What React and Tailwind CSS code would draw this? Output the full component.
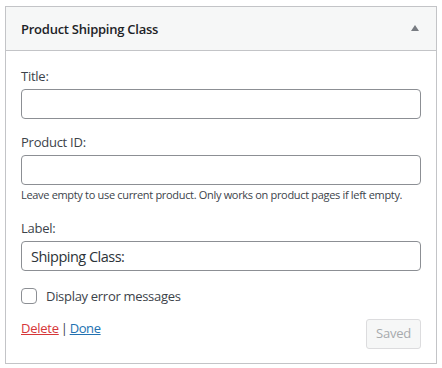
const Field = ({ label, value = "", className = "" }) => (
  <div className={className}>
    <label className="block h-5 leading-5 mb-[3px]">{label}</label>
    <input
      type="text"
      defaultValue={value}
      className="block w-[400px] h-[30px] px-[9px] border border-[#8c8f94] rounded-[4px] bg-white text-[#2c3338] text-[14.5px] tracking-[-0.5px] outline-none"
    />
  </div>
);

const App = () => {
  return (
    <div className="pt-[6px] pl-[5px] bg-white font-['Open_Sans',sans-serif] text-[13px] tracking-[-0.25px] text-[#3c434a]">
      <div className="w-[432px] h-[358px] border border-[#c3c4c7] bg-white flex flex-col">
        <div className="h-[44px] shrink-0 flex items-center justify-between pl-[15px] pr-[17px] bg-[#f6f7f7] border-b border-[#c3c4c7]">
          <h3 className="font-semibold text-[#1d2327] leading-5">Product Shipping Class</h3>
          <svg width="8" height="6" viewBox="0 0 8 6" className="mb-[1px]">
            <path d="M4 0 L8 6 L0 6 Z" fill="#787c82" />
          </svg>
        </div>

        <div className="pt-[15px] px-[15px] flex flex-col">
          <Field label="Title:" />
          <Field label="Product ID:" className="mt-[13px]" />
          <p className="mt-[2px] text-[11px] tracking-[-0.32px] leading-4 whitespace-nowrap">
            Leave empty to use current product. Only works on product pages if left empty.
          </p>
          <Field label="Label:" value="Shipping Class:" className="mt-[15px]" />

          <label className="mt-[15px] h-5 flex items-center gap-[9px]">
            <input
              type="checkbox"
              className="appearance-none w-4 h-4 border border-[#8c8f94] rounded-[4px] bg-white"
            />
            <span className="leading-5 tracking-[-0.3px]">Display error messages</span>
          </label>

          <div className="mt-[12px] flex justify-between items-start">
            <div className="leading-5">
              <a href="#" className="text-[#d63638] underline">Delete</a>
              <span className="mx-[2px]">|</span>
              <a href="#" className="text-[#2271b1] underline tracking-[-0.4px]">Done</a>
            </div>
            <button
              disabled
              className="mt-[1px] h-[30px] w-[55px] border border-[#dcdcde] rounded-[3px] bg-[#f6f7f7] text-[#a7aaad]"
            >
              Saved
            </button>
          </div>
        </div>
      </div>
    </div>
  );
};

export default App;
